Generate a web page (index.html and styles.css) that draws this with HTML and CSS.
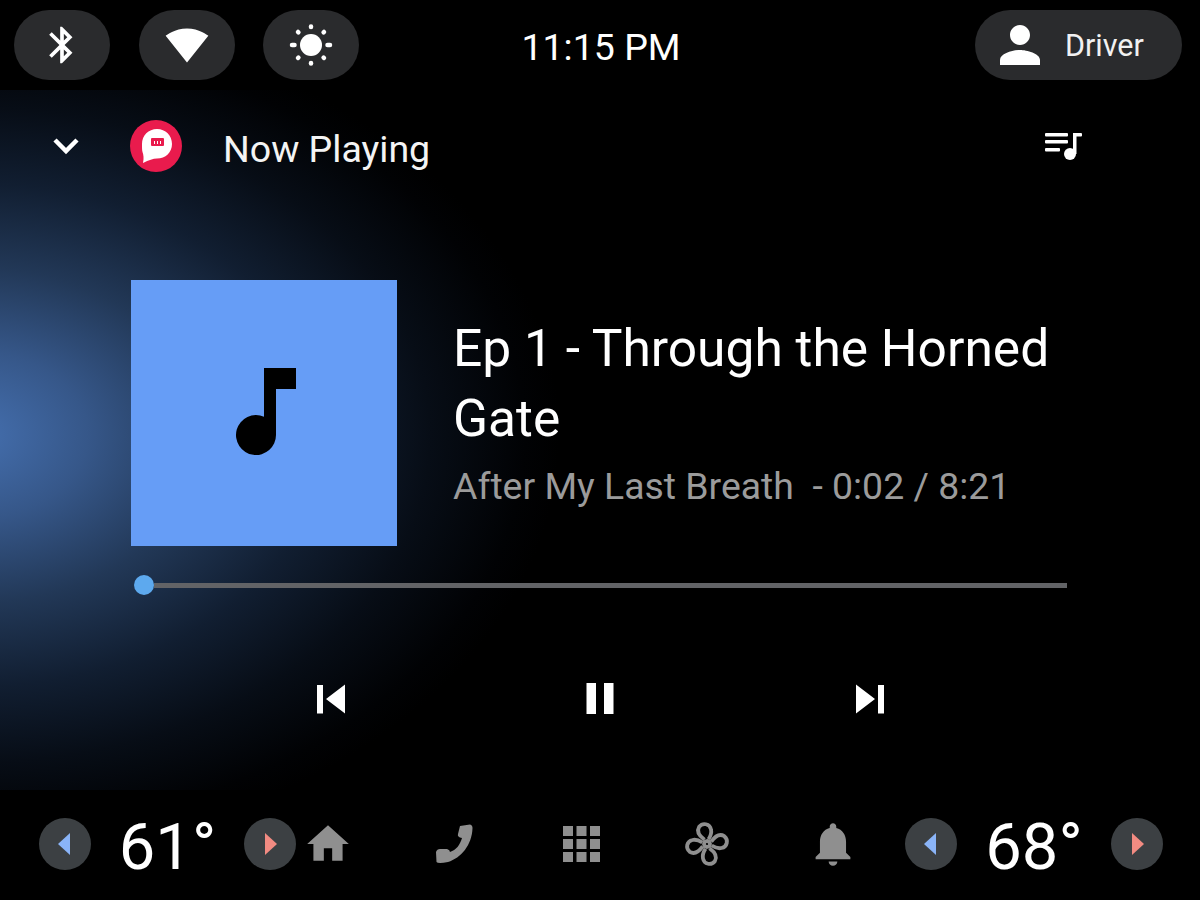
FILE: index.html
```html
<!DOCTYPE html>
<html lang="en">
<head>
<meta charset="utf-8">
<title>Now Playing</title>
<link rel="stylesheet" href="styles.css">
</head>
<body>
<div class="app">
  <header class="status">
    <div class="quick">
      <div class="pill"><svg class="ico44" viewBox="0 0 24 24"><path fill="#fff" d="M17.71 7.71L12 2h-1v7.59L6.41 5 5 6.41 10.59 12 5 17.59 6.41 19 11 14.41V22h1l5.71-5.71-4.3-4.29 4.3-4.29zM13 5.83l1.88 1.88L13 9.59V5.83zm1.88 10.46L13 18.17v-3.76l1.88 1.88z"/></svg></div>
      <div class="pill"><svg class="ico44" viewBox="0 0 24 24"><path fill="#fff" d="M12.01 21.49L23.64 7c-.45-.34-4.93-4-11.64-4C5.28 3 .81 6.66.36 7l11.63 14.49.01.01.01-.01z"/></svg></div>
      <div class="pill"><svg class="ico44" viewBox="0 0 44 44"><circle cx="22" cy="22" r="11" fill="#fff"/><g stroke="#fff" stroke-width="4.500" stroke-linecap="round"><path d="M22 3.500v.5"/><path d="M22 40v.5"/><path d="M3 22h2.500"/><path d="M38.500 22h2.500"/><path d="M9 9l.4.4"/><path d="M35 9l-.4.4"/><path d="M9 35l.4-.4"/><path d="M35 35l-.4-.4"/></g></svg></div>
    </div>
    <div class="clock">11:15 PM</div>
    <div class="user">
      <div class="pill driver"><svg class="ico60" viewBox="0 0 24 24"><path fill="#fff" d="M12 12c2.21 0 4-1.79 4-4s-1.79-4-4-4-4 1.79-4 4 1.79 4 4 4zm0 2c-2.67 0-8 1.34-8 4v2h16v-2c0-2.66-5.33-4-8-4z"/></svg><span>Driver</span></div>
    </div>
  </header>

  <main class="player">
    <div class="bar">
      <svg class="chevron" viewBox="0 0 36 36"><path d="M7 12l11 11 11-11" fill="none" stroke="#fff" stroke-width="4.500"/></svg>
      <svg class="logo" viewBox="0 0 52 52"><circle cx="26" cy="26" r="26" fill="#e91b4d"/><path fill="#fff" d="M27 9c8.500 0 15 6.500 15 15s-6.500 14.500-15 14.500c-4 0-8 1.500-14 4.500 1-5 .5-8-.5-11-.5-2-.5-4-.5-8C12 15.500 18.500 9 27 9z"/><rect x="21" y="18" width="13" height="8" rx="1" fill="#e91b4d"/><path d="M24.500 21v3M27.500 21v3M30.500 21v3" stroke="#fff" stroke-width="1"/></svg>
      <h1 class="bar-title">Now Playing</h1>
      <svg class="queue" viewBox="0 0 40 32"><g fill="#fff"><rect x="0" y="3" width="23" height="3.500" rx="1"/><rect x="0" y="10" width="23" height="3.500" rx="1"/><rect x="0" y="18" width="15" height="3.500" rx="1"/><circle cx="25" cy="24" r="6"/><rect x="28" y="3" width="3.500" height="21"/><rect x="28" y="3" width="9" height="3.500" rx="1"/></g></svg>
    </div>

    <section class="track">
      <div class="album"><svg class="album-note" viewBox="0 0 266 266"><path fill="#000" d="M133 88h32v21h-20v46a20 20 0 1 1-12-18.300z"/></svg></div>
      <div class="meta">
        <h2 class="title">Ep 1 - Through the Horned Gate</h2>
        <p class="sub">After My Last Breath&nbsp; - 0:02 / 8:21</p>
      </div>
    </section>

    <div class="slider"><span class="thumb"></span><span class="rail"></span></div>

    <div class="controls">
      <svg class="ctl" viewBox="0 0 36 36"><path fill="#fff" d="M5 4h6v28.500H5zM33 3.500v29L14 18z"/></svg>
      <svg class="ctl" viewBox="0 0 36 36"><path fill="#fff" d="M4.500 2h9.500v31H4.500zM22 2h9.500v31H22z"/></svg>
      <svg class="ctl" viewBox="0 0 36 36"><path fill="#fff" d="M26 4h6v28.500h-6zM4 3.500v29L23 18z"/></svg>
    </div>
  </main>

  <footer class="dock">
    <div class="climate">
      <button class="round"><svg class="tri" viewBox="0 0 52 52"><path fill="#8ab4f8" d="M31 15v22L19 26z"/></svg></button>
      <div class="temp">61°</div>
      <button class="round"><svg class="tri" viewBox="0 0 52 52"><path fill="#f28b82" d="M21 15v22l12-11z"/></svg></button>
    </div>
    <nav class="nav">
      <svg class="nav-ico" viewBox="0 0 24 24"><path d="M10 20v-6h4v6h5v-8h3L12 3 2 12h3v8z"/></svg>
      <svg class="nav-ico" viewBox="0 0 50 50"><path d="M31 7L41 5.500Q43.500 6 43.500 9C43 26 32 39 19 43Q9 45 7.500 43L7 33Q8 30 11 30L18 30Q21 31 21 33C27 31 31 26 33 19Q28 18 29 15Z"/></svg>
      <svg class="nav-ico" viewBox="0 0 50 50"><rect x="7" y="7" width="10" height="10"/><rect x="20.500" y="7" width="10" height="10"/><rect x="34" y="7" width="10" height="10"/><rect x="7" y="20" width="10" height="10"/><rect x="20.500" y="20" width="10" height="10"/><rect x="34" y="20" width="10" height="10"/><rect x="7" y="33" width="10" height="10"/><rect x="20.500" y="33" width="10" height="10"/><rect x="34" y="33" width="10" height="10"/></svg>
      <svg class="nav-ico" viewBox="-25 -25 50 50"><g class="fan" transform="rotate(-6)"><circle r="3"/><path d="M-2-4.500C-7-9-9-14-6-18C-2-22 5-20 5.500-14C6-10 4-7 2-4.500"/><path transform="rotate(90)" d="M-2-4.500C-7-9-9-14-6-18C-2-22 5-20 5.500-14C6-10 4-7 2-4.500"/><path transform="rotate(180)" d="M-2-4.500C-7-9-9-14-6-18C-2-22 5-20 5.500-14C6-10 4-7 2-4.500"/><path transform="rotate(270)" d="M-2-4.500C-7-9-9-14-6-18C-2-22 5-20 5.500-14C6-10 4-7 2-4.500"/></g></svg>
      <svg class="nav-ico" viewBox="0.500 0.500 23 23"><path d="M12 22c1.100 0 2-.9 2-2h-4c0 1.100.89 2 2 2zm6-6v-5c0-3.070-1.640-5.640-4.500-6.320V4c0-.83-.67-1.500-1.500-1.500s-1.500.67-1.500 1.500v.68C7.630 5.360 6 7.920 6 11v5l-2 2v1h16v-1l-2-2z"/></svg>
    </nav>
    <div class="climate">
      <button class="round"><svg class="tri" viewBox="0 0 52 52"><path fill="#8ab4f8" d="M31 15v22L19 26z"/></svg></button>
      <div class="temp temp-wide">68°</div>
      <button class="round"><svg class="tri" viewBox="0 0 52 52"><path fill="#f28b82" d="M21 15v22l12-11z"/></svg></button>
    </div>
  </footer>
</div>
</body>
</html>
```
FILE: styles.css
```css
* { box-sizing: border-box; }
html, body { margin: 0; padding: 0; background: #000; }
.app {
  width: 1200px;
  height: 900px;
  display: flex;
  flex-direction: column;
  background: #000;
  color: #fff;
  font-family: Roboto, "Liberation Sans", sans-serif;
  overflow: hidden;
}
.status {
  height: 90px;
  flex: none;
  padding: 10px 18px 10px 14px;
  display: grid;
  grid-template-columns: 1fr auto 1fr;
  align-items: center;
}
.quick { display: flex; gap: 28.5px; }
.pill {
  width: 96px;
  height: 70px;
  border-radius: 35px;
  background: #2a2b2d;
  display: flex;
  align-items: center;
  justify-content: center;
}
.ico44 { width: 44px; height: 44px; }
.ico60 { width: 60px; height: 60px; flex: none; }
.clock { font-size: 37.5px; line-height: 70px; padding-top: 2px; height: 70px; margin-left: 6px; }
.user { display: flex; justify-content: flex-end; }
.driver {
  width: 207px;
  justify-content: flex-start;
  padding-left: 15px;
  gap: 15px;
  font-size: 30.5px;
  color: #f1f1f1;
}
.player {
  flex: 1;
  min-height: 0;
  background: radial-gradient(ellipse 590px 420px at -30px 345px, #4570b0 0%, #365789 20%, #223857 40%, #111e31 60%, #070d16 78%, #010204 94%, #000 100%);
}
.bar {
  height: 112px;
  display: flex;
  align-items: center;
  padding: 0 115px 0 48px;
}
.chevron { width: 36px; height: 36px; flex: none; }
.logo { width: 52px; height: 52px; margin-left: 46px; flex: none; }
.bar-title { margin: 5px 0 0 41px; font-size: 37.5px; font-weight: 400; color: #f4f4f4; }
.queue { width: 40px; height: 32px; margin-left: auto; }
.track {
  margin-top: 78px;
  padding-left: 131px;
  display: flex;
  align-items: center;
  gap: 56px;
}
.album { width: 266px; height: 266px; background: #669df6; flex: none; }
.album-note { display: block; width: 266px; height: 266px; }
.meta { width: 640px; padding-bottom: 4px; }
.title { margin: 0; font-size: 51.5px; line-height: 70px; font-weight: 400; }
.sub { margin: 10px 0 0; font-size: 37.4px; line-height: 44px; color: #9b9b9b; }
.slider {
  margin: 27px 133px 0 134px;
  height: 24px;
  display: flex;
  align-items: center;
}
.thumb { width: 20px; height: 20px; border-radius: 50%; background: #5da9ee; flex: none; }
.rail { flex: 1; height: 5px; background: #626366; }
.controls {
  margin-top: 84px;
  display: flex;
  justify-content: center;
  gap: 234px;
}
.ctl { width: 36px; height: 36px; }
.dock {
  flex: none;
  height: 110px;
  padding: 0 37px 2px 39px;
  display: flex;
  align-items: center;
}
.climate { display: flex; align-items: center; flex: none; }
.round {
  width: 52px;
  height: 52px;
  padding: 0;
  border: 0;
  border-radius: 50%;
  background: #3c4043;
}
.tri { display: block; width: 52px; height: 52px; }
.temp { width: 153px; text-align: center; font-size: 65px; line-height: 70px; padding-top: 6px; }
.temp-wide { width: 154px; }
.nav {
  flex: 1;
  display: flex;
  gap: 76.25px;
  padding-left: 7px;
}
.nav-ico { width: 50px; height: 50px; fill: #8f8f8f; flex: none; }
.fan { fill: none; stroke: #8f8f8f; stroke-width: 3.8px; }
```
